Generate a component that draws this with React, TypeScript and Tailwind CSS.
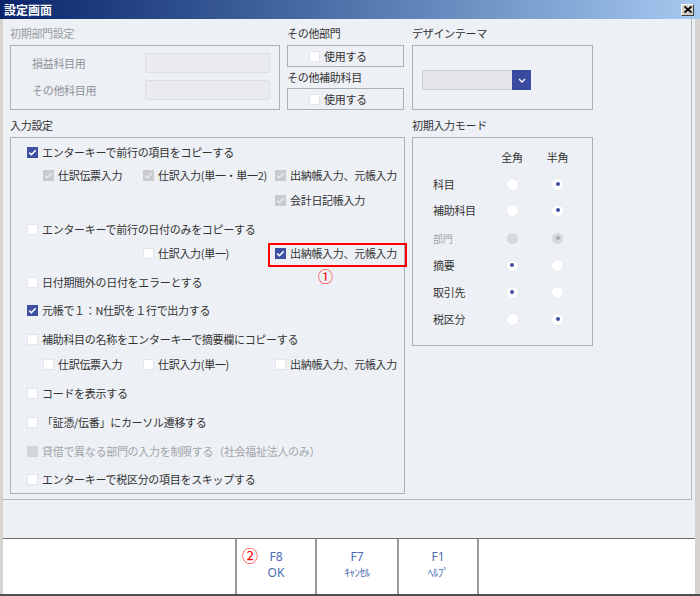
import type { ReactNode } from "react"

type CbState = "on" | "off" | "dis-on" | "dis-off"

function Box({ state }: { state: CbState }) {
  if (state === "on" || state === "dis-on") {
    const bg = state === "on" ? "bg-[#3f50a2]" : "bg-[#c9cbce]"
    const stroke = state === "on" ? "#ffffff" : "#e9eaec"
    return (
      <span className={`flex h-[11px] w-[11px] shrink-0 items-center justify-center ${bg}`}>
        <svg width="11" height="11" viewBox="0 0 11 11">
          <path d="M2.3 5.6 L4.4 7.7 L8.7 3.2" fill="none" stroke={stroke} strokeWidth="1.6" />
        </svg>
      </span>
    )
  }
  if (state === "dis-off") {
    return <span className="h-[11px] w-[11px] shrink-0 bg-[#d3d5d8]" />
  }
  return <span className="h-[11px] w-[11px] shrink-0 border border-[#e2e5e9] bg-white" />
}

function Check({ state, label, dim }: { state: CbState; label: string; dim?: boolean }) {
  return (
    <div className="flex items-center gap-[4px] whitespace-nowrap">
      <Box state={state} />
      <span className={dim ? "text-[#a3a6aa]" : "text-[#333333]"}>{label}</span>
    </div>
  )
}

function Row({ mt, children }: { mt: string; children: ReactNode }) {
  return <div className={`flex h-[20px] items-center ${mt}`}>{children}</div>
}

function Radio({ on, disabled }: { on?: boolean; disabled?: boolean }) {
  return (
    <span
      className={`flex h-[11px] w-[11px] items-center justify-center rounded-full ${
        disabled ? "bg-[#d7d9dc]" : "bg-white shadow-[0_0_0_1px_#e6e9ed]"
      }`}
    >
      {on && <span className={`h-[4px] w-[4px] rounded-full ${disabled ? "bg-[#a9abae]" : "bg-[#3f50a2]"}`} />}
    </span>
  )
}

function ModeRow({ mt, label, zen, han, disabled }: { mt: string; label: string; zen?: boolean; han?: boolean; disabled?: boolean }) {
  return (
    <div className={`flex h-[20px] items-center ${mt}`}>
      <span className={`w-[56px] ${disabled ? "text-[10px] text-[#a3a6aa]" : "text-[#333333]"}`}>{label}</span>
      <span className="flex w-[46px] justify-center">
        <Radio on={zen} disabled={disabled} />
      </span>
      <span className="flex w-[45px] justify-center">
        <Radio on={han} disabled={disabled} />
      </span>
    </div>
  )
}

function Label({ children, dim, className = "" }: { children: ReactNode; dim?: boolean; className?: string }) {
  return (
    <div className={`h-[16px] leading-[16px] ${dim ? "text-[#9a9da2]" : "text-[#333333]"} ${className}`}>
      {children}
    </div>
  )
}

function FnKey({ keyName, label, small, width, children }: { keyName: string; label: string; small?: boolean; width: string; children?: ReactNode }) {
  return (
    <div className={`relative flex ${width} flex-col items-center border-l-2 border-[#9a9a9a] pt-[10px] font-['Noto_Sans','Noto_Sans_CJK_JP',sans-serif] leading-[16px] tracking-normal text-[#4a6db3]`}>
      {children}
      <span className="text-[12px]">{keyName}</span>
      <span className={small ? "text-[11px] tracking-[-0.5px]" : "text-[12px]"}>{label}</span>
    </div>
  )
}

export default function App() {
  return (
    <div className="flex h-[596px] w-[700px] flex-col bg-[#d6d3ce] font-['Noto_Sans_CJK_JP',sans-serif] text-[11px] tracking-[-0.3px] text-[#333333]">
      {/* title bar */}
      <div className="flex h-[19px] shrink-0 items-center justify-between bg-linear-to-r from-[#0a246a] to-[#a6caf0] pl-[4px] pr-[6px]">
        <span className="text-[12px] font-bold leading-none tracking-normal text-white">設定画面</span>
        <span className="flex h-[12px] w-[13px] items-center justify-center border-t border-l border-t-white border-l-white border-b border-r border-b-[#404040] border-r-[#404040] bg-[#d4d0c8]">
          <svg width="8" height="7" viewBox="0 0 8 7">
            <path d="M0.5 0.5 L7.5 6.5 M7.5 0.5 L0.5 6.5" stroke="#000" strokeWidth="1.8" />
          </svg>
        </span>
      </div>

      <div className="ml-[3px] mr-[5px] flex flex-1 flex-col bg-[#edf0f5]">
        {/* settings area */}
        <div className="mr-[3px] h-[481px] shrink-0 border-r border-b border-[#b4b8be] pt-[6px] pl-[7px]">
          {/* top row */}
          <div className="flex">
            <div className="w-[270px]">
              <Label dim className="mb-[4px]">初期部門設定</Label>
              <div className="h-[65px] border border-[#aab0b8] pt-[7px] pl-[21px]">
                <div className="flex h-[20px] items-center">
                  <span className="w-[113px] text-[#8f9297]">損益科目用</span>
                  <span className="h-[20px] w-[125px] rounded-[2px] border border-[#dcdee1] bg-[#e9ebee]" />
                </div>
                <div className="mt-[7px] flex h-[20px] items-center">
                  <span className="w-[113px] text-[#8f9297]">その他科目用</span>
                  <span className="h-[20px] w-[125px] rounded-[2px] border border-[#dcdee1] bg-[#e9ebee]" />
                </div>
              </div>
            </div>

            <div className="ml-[7px] w-[117px]">
              <Label className="mb-[4px]">その他部門</Label>
              <div className="flex h-[22px] items-center border border-[#aab0b8] pl-[21px]">
                <Check state="off" label="使用する" />
              </div>
              <Label className="mt-[2px] mb-[3px]">その他補助科目</Label>
              <div className="flex h-[22px] items-center border border-[#aab0b8] pl-[21px]">
                <Check state="off" label="使用する" />
              </div>
            </div>

            <div className="ml-[8px] w-[181px]">
              <Label className="mb-[4px]">デザインテーマ</Label>
              <div className="h-[65px] border border-[#aab0b8] pt-[24px] pl-[9px]">
                <div className="flex h-[20px] w-[109px]">
                  <span className="flex-1 rounded-l-[4px] border border-r-0 border-[#c9ccd1] bg-[#e4e6ea]" />
                  <span className="flex w-[19px] items-center justify-center bg-[#3a4a9e]">
                    <svg width="8" height="5" viewBox="0 0 8 5">
                      <path d="M1 1 L4 4 L7 1" fill="none" stroke="#ffffff" strokeWidth="1.3" />
                    </svg>
                  </span>
                </div>
              </div>
            </div>
          </div>

          {/* main row */}
          <div className="mt-[7px] flex">
            <div className="w-[395px]">
              <Label className="mb-[4px]">入力設定</Label>
              <div className="h-[357px] border border-[#aab0b8] pt-[4px] pl-[16px]">
                <Row mt="">
                  <Check state="on" label="エンターキーで前行の項目をコピーする" />
                </Row>
                <Row mt="mt-[3px]">
                  <div className="ml-[16px] w-[100px]">
                    <Check state="dis-on" label="仕訳伝票入力" />
                  </div>
                  <div className="w-[132px]">
                    <Check state="dis-on" label="仕訳入力(単一・単一2)" />
                  </div>
                  <Check state="dis-on" label="出納帳入力、元帳入力" />
                </Row>
                <Row mt="mt-[5px]">
                  <div className="ml-[248px]">
                    <Check state="dis-on" label="会計日記帳入力" />
                  </div>
                </Row>
                <Row mt="mt-[9px]">
                  <Check state="off" label="エンターキーで前行の日付のみをコピーする" />
                </Row>
                <Row mt="mt-[4px]">
                  <div className="ml-[116px] w-[132px]">
                    <Check state="off" label="仕訳入力(単一)" />
                  </div>
                  <div className="relative">
                    <Check state="on" label="出納帳入力、元帳入力" />
                    <span className="absolute -top-[2px] -left-[7px] h-[24px] w-[139px] border-2 border-[#ff0000]" />
                    <span className="absolute top-[23px] left-[43px] text-[15px] leading-[16px] tracking-normal text-[#ff0000]">①</span>
                  </div>
                </Row>
                <Row mt="mt-[9px]">
                  <Check state="off" label="日付期間外の日付をエラーとする" />
                </Row>
                <Row mt="mt-[8px]">
                  <Check state="on" label="元帳で１：N仕訳を１行で出力する" />
                </Row>
                <Row mt="mt-[9px]">
                  <Check state="off" label="補助科目の名称をエンターキーで摘要欄にコピーする" />
                </Row>
                <Row mt="mt-[5px]">
                  <div className="ml-[16px] w-[100px]">
                    <Check state="off" label="仕訳伝票入力" />
                  </div>
                  <div className="w-[132px]">
                    <Check state="off" label="仕訳入力(単一)" />
                  </div>
                  <Check state="off" label="出納帳入力、元帳入力" />
                </Row>
                <Row mt="mt-[9px]">
                  <Check state="off" label="コードを表示する" />
                </Row>
                <Row mt="mt-[9px]">
                  <Check state="off" label="「証憑/伝番」にカーソル遷移する" />
                </Row>
                <Row mt="mt-[9px]">
                  <Check state="dis-off" label="貸借で異なる部門の入力を制限する（社会福祉法人のみ）" dim />
                </Row>
                <Row mt="mt-[8px]">
                  <Check state="off" label="エンターキーで税区分の項目をスキップする" />
                </Row>
              </div>
            </div>

            <div className="ml-[7px] w-[181px]">
              <Label className="mb-[4px]">初期入力モード</Label>
              <div className="h-[209px] border border-[#aab0b8] pt-[9px] pl-[20px]">
                <div className="flex h-[20px] items-center">
                  <span className="w-[56px]" />
                  <span className="w-[46px] text-center">全角</span>
                  <span className="w-[45px] text-center">半角</span>
                </div>
                <ModeRow mt="mt-[7px]" label="科目" han />
                <ModeRow mt="mt-[6px]" label="補助科目" han />
                <ModeRow mt="mt-[8px]" label="部門" han disabled />
                <ModeRow mt="mt-[7px]" label="摘要" zen />
                <ModeRow mt="mt-[7px]" label="取引先" zen />
                <ModeRow mt="mt-[7px]" label="税区分" han />
              </div>
            </div>
          </div>
        </div>

        {/* spacer */}
        <div className="h-[38px] shrink-0" />

        {/* function keys */}
        <div className="flex h-[56px] shrink-0 border-t border-[#6e6e6e] bg-white">
          <div className="w-[232px]" />
          <FnKey keyName="F8" label="OK" width="w-[80px]">
            <span className="absolute top-[8px] left-[5px] font-['Noto_Sans_CJK_JP',sans-serif] text-[16px] leading-[16px] text-[#ff0000]">②</span>
          </FnKey>
          <FnKey keyName="F7" label="ｷｬﾝｾﾙ" small width="w-[82px]" />
          <FnKey keyName="F1" label="ﾍﾙﾌﾟ" small width="w-[80px]" />
          <div className="flex-1 border-l-2 border-[#9a9a9a]" />
        </div>
      </div>

      <div className="h-[2px] shrink-0 bg-[#4f4f4f]" />
    </div>
  )
}
